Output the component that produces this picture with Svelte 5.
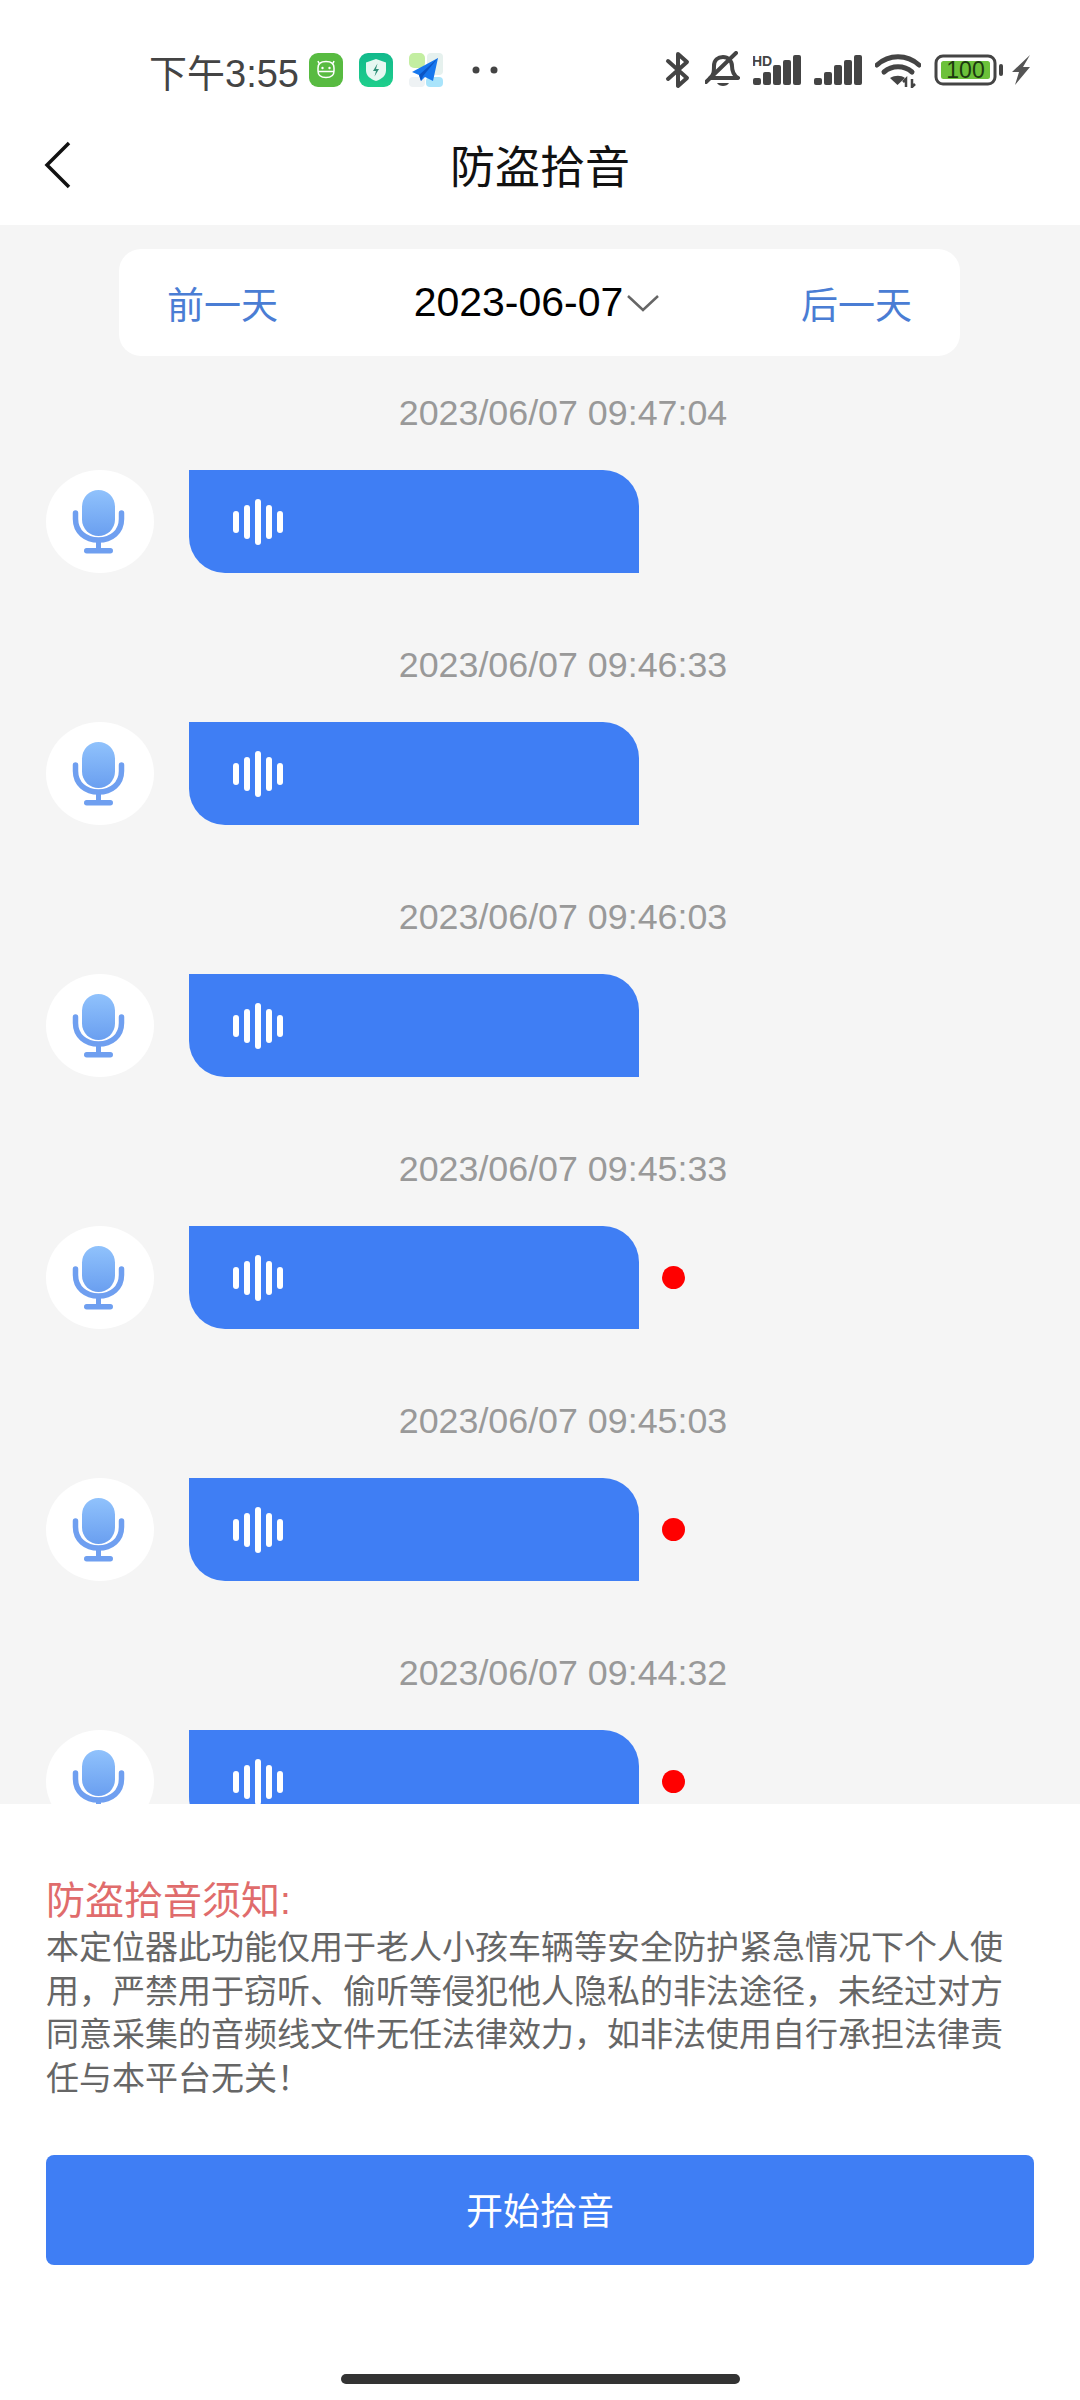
<script>
  const records = [
    { time: '2023/06/07 09:47:04', unread: false },
    { time: '2023/06/07 09:46:33', unread: false },
    { time: '2023/06/07 09:46:03', unread: false },
    { time: '2023/06/07 09:45:33', unread: true },
    { time: '2023/06/07 09:45:03', unread: true },
    { time: '2023/06/07 09:44:32', unread: true }
  ];

  const waveBars = [22, 34, 46, 34, 22];
  const signalBars = [
    { x: 0, h: 7 },
    { x: 10, h: 13 },
    { x: 20, h: 20 },
    { x: 30, h: 25 },
    { x: 40, h: 30 }
  ];
</script>

<div class="page">
  <div class="status-bar">
    <div class="status-left">
      <span class="clock">下午3:55</span>
      <svg class="app-icon" viewBox="0 0 34 34">
        <rect width="34" height="34" rx="9" fill="#58bb41" />
        <path d="M9 15c0-4 3-6.500 8-6.500s8 2.500 8 6.500v3c0 4-3 6.500-8 6.500s-8-2.500-8-6.500z" fill="none" stroke="#fff" stroke-width="1.500" />
        <path d="M10 10.500L9 8M24 10.500L25 8M9 18.500h16" fill="none" stroke="#fff" stroke-width="1.500" />
        <circle cx="13.500" cy="15" r="1.200" fill="#fff" />
        <circle cx="20.500" cy="15" r="1.200" fill="#fff" />
      </svg>
      <svg class="app-icon" viewBox="0 0 34 34">
        <defs>
          <linearGradient id="shield-bg" x1="0" y1="0" x2="0" y2="1">
            <stop offset="0" stop-color="#12b98c" />
            <stop offset="1" stop-color="#1fcf8c" />
          </linearGradient>
        </defs>
        <rect width="34" height="34" rx="9" fill="url(#shield-bg)" />
        <path d="M17 6l10 3.500v8c0 5-4 8.500-10 10.500-6-2-10-5.500-10-10.500v-8z" fill="#e6f8f2" />
        <path d="M18.500 10.500l-4.500 7.500h3l-1.500 5.500 4.500-7.500h-3z" fill="#2f8f78" />
      </svg>
      <svg class="app-icon" viewBox="0 0 34 34">
        <rect x="0" y="0" width="16" height="15" rx="5" fill="#c3eea1" />
        <rect x="18" y="0" width="16" height="22" rx="4" fill="#e6f1ee" />
        <rect x="0" y="24" width="16" height="10" rx="4" fill="#eef2f4" />
        <rect x="17" y="24" width="17" height="10" rx="4" fill="#a9e4fb" />
        <path d="M29 5L3 19l7 3 2 6 4-4 8 4z" fill="#1677ee" />
        <path d="M29 5L10 22l2 6 2-5z" fill="#0b55c4" />
      </svg>
      <svg class="more-dots" width="26" height="8" viewBox="0 0 26 8">
        <circle cx="4" cy="4" r="3.500" fill="#444" />
        <circle cx="22" cy="4" r="3.500" fill="#444" />
      </svg>
    </div>

    <div class="status-right">
      <svg width="27" height="38" viewBox="0 0 27 38">
        <path d="M3 10l19 17-9 8V3l9 8L3 28" fill="none" stroke="#444" stroke-width="4" stroke-linecap="round" stroke-linejoin="round" />
      </svg>
      <svg width="35" height="38" viewBox="0 0 35 38">
        <path d="M5 27c4-3 4-7 4-12 0-6 4-9 9-9s9 4 9 9c0 5 1 9 6 12z" fill="none" stroke="#444" stroke-width="4" stroke-linejoin="round" />
        <path d="M12 32c2 4 10 4 12 0z" fill="#444" />
        <path d="M1 31L31 2" stroke="#444" stroke-width="4" stroke-linecap="round" />
      </svg>
      <svg width="48" height="32" viewBox="0 0 48 32">
        <text class="hd" x="-1" y="12">HD</text>
        {#each signalBars as bar}
          <rect x={bar.x} y={31 - bar.h} width="8" height={bar.h} rx="2" fill="#444" />
        {/each}
      </svg>
      <svg width="48" height="32" viewBox="0 0 48 32">
        {#each signalBars as bar}
          <rect x={bar.x} y={31 - bar.h} width="8" height={bar.h} rx="2" fill="#444" />
        {/each}
      </svg>
      <svg width="46" height="35" viewBox="0 0 46 35">
        <path d="M2 12c12-11 30-11 42 0" fill="none" stroke="#444" stroke-width="5" stroke-linecap="round" />
        <path d="M9 19c8-7 20-7 28 0" fill="none" stroke="#444" stroke-width="5" stroke-linecap="round" />
        <path d="M15 25c5-3 11-3 15 0l-7.500 7z" fill="#444" />
        <path d="M31 34v-8l-3 3M37 26v8l3-3" fill="none" stroke="#444" stroke-width="2.500" />
      </svg>
      <svg width="69" height="32" viewBox="0 0 69 32">
        <rect x="2" y="2" width="59" height="28" rx="7" fill="none" stroke="#444" stroke-width="3" />
        <rect x="7" y="7" width="49" height="18" rx="2.500" fill="#6cc13a" />
        <text class="batt" x="31.500" y="24">100</text>
        <rect x="65" y="10" width="4" height="12" rx="2" fill="#444" />
      </svg>
      <svg class="bolt" width="19" height="30" viewBox="0 0 19 30">
        <path d="M19 0L1 17h7L4 30l15-18h-7z" fill="#555" />
      </svg>
    </div>
  </div>

  <header class="nav-bar">
    <svg class="back" width="28" height="48" viewBox="0 0 28 48">
      <path d="M25 2L3 24l22 22" fill="none" stroke="#111" stroke-width="3.500" />
    </svg>
    <h1>防盗拾音</h1>
  </header>

  <main class="content">
    <div class="date-bar">
      <span class="day-link">前一天</span>
      <div class="date-picker">
        <span class="date">2023-06-07</span>
        <svg width="32" height="18" viewBox="0 0 32 18">
          <path d="M1 2l15 14L31 2" fill="none" stroke="#666" stroke-width="2.500" />
        </svg>
      </div>
      <span class="day-link">后一天</span>
    </div>

    {#each records as record}
      <section class="record">
        <div class="stamp">{record.time}</div>
        <div class="row">
          <div class="avatar">
            <svg width="108" height="103" viewBox="0 0 108 103">
              <defs>
                <linearGradient id="mic-fill" x1="0" y1="0" x2="0" y2="1">
                  <stop offset="0" stop-color="#90c2fc" />
                  <stop offset="1" stop-color="#6a9ff0" />
                </linearGradient>
              </defs>
              <rect x="36" y="20" width="33" height="46" rx="16.500" fill="url(#mic-fill)" />
              <path d="M29.500 43v6c0 13 10 21 23 21s23-8 23-21v-6" fill="none" stroke="#6f9ff0" stroke-width="5.500" stroke-linecap="round" />
              <path d="M52.500 70v10" stroke="#6f9ff0" stroke-width="5" />
              <rect x="38" y="78" width="29" height="5.500" rx="2.700" fill="#6f9ff0" />
            </svg>
          </div>
          <div class="bubble">
            <div class="wave">
              {#each waveBars as h}
                <span style="height: {h}px"></span>
              {/each}
            </div>
          </div>
          {#if record.unread}
            <span class="dot"></span>
          {/if}
        </div>
      </section>
    {/each}
  </main>

  <div class="sheet">
    <h2>防盗拾音须知:</h2>
    <p>本定位器此功能仅用于老人小孩车辆等安全防护紧急情况下个人使用，严禁用于窃听、偷听等侵犯他人隐私的非法途径，未经过对方同意采集的音频线文件无任法律效力，如非法使用自行承担法律责任与本平台无关！</p>
    <button class="start-btn">开始拾音</button>
    <div class="home-bar"></div>
  </div>
</div>

<style>
  :global(body) {
    margin: 0;
    background: #fff;
  }

  .page {
    width: 1080px;
    height: 2400px;
    display: flex;
    flex-direction: column;
    overflow: hidden;
    background: #fff;
    font-family: "Liberation Sans", "Noto Sans CJK SC", sans-serif;
  }

  .status-bar {
    height: 68px;
    padding: 36px 50px 0 149px;
    display: flex;
    justify-content: space-between;
    align-items: center;
    flex-shrink: 0;
  }

  .status-left {
    display: flex;
    align-items: center;
    gap: 16px;
  }

  .clock {
    font-size: 38px;
    color: #444;
    margin-right: -6px;
  }

  .app-icon {
    width: 34px;
    height: 34px;
  }

  .more-dots {
    margin-left: 13px;
  }

  .status-right {
    display: flex;
    align-items: center;
    gap: 13px;
  }

  .hd {
    font-size: 14px;
    font-weight: 700;
    fill: #444;
  }

  .batt {
    font-size: 23px;
    text-anchor: middle;
    fill: #1d3a10;
  }

  .bolt {
    margin-left: -5px;
  }

  .nav-bar {
    height: 121px;
    padding-left: 44px;
    display: flex;
    align-items: center;
    position: relative;
    flex-shrink: 0;
  }

  .nav-bar h1 {
    position: absolute;
    left: 0;
    right: 0;
    margin: 0;
    text-align: center;
    font-size: 45px;
    font-weight: 400;
    color: #111;
  }

  .content {
    flex: 1;
    min-height: 0;
    overflow: hidden;
    background: #f5f5f5;
    padding-top: 24px;
  }

  .date-bar {
    height: 107px;
    margin: 0 120px 37px 119px;
    padding: 0 48px;
    display: flex;
    justify-content: space-between;
    align-items: center;
    background: #fff;
    border-radius: 22px;
  }

  .day-link {
    font-size: 37px;
    color: #4a7dd4;
  }

  .date-picker {
    display: flex;
    align-items: center;
    gap: 4px;
    margin-right: 6px;
  }

  .date {
    font-size: 41px;
    color: #000;
  }

  .record {
    margin-bottom: 72px;
  }

  .stamp {
    height: 40px;
    line-height: 40px;
    padding-left: 46px;
    margin-bottom: 37px;
    text-align: center;
    font-size: 35.800px;
    color: #999;
  }

  .row {
    display: flex;
    align-items: center;
    padding-left: 46px;
    gap: 35px;
  }

  .avatar {
    width: 108px;
    height: 103px;
    border-radius: 50%;
    background: #fff;
    flex-shrink: 0;
  }

  .avatar svg {
    display: block;
  }

  .bubble {
    width: 450px;
    height: 103px;
    padding-left: 44px;
    box-sizing: border-box;
    display: flex;
    align-items: center;
    background: #3f7ef4;
    border-radius: 0 36px 0 36px;
  }

  .wave {
    display: flex;
    align-items: center;
    gap: 5px;
  }

  .wave span {
    width: 6px;
    background: #fff;
    border-radius: 3px;
  }

  .dot {
    width: 23px;
    height: 23px;
    margin-left: -12px;
    border-radius: 50%;
    background: #f00;
  }

  .sheet {
    height: 596px;
    padding: 72px 46px 0;
    box-sizing: border-box;
    display: flex;
    flex-direction: column;
    background: #fff;
    flex-shrink: 0;
  }

  .sheet h2 {
    margin: 0;
    height: 50px;
    line-height: 50px;
    font-size: 39px;
    font-weight: 400;
    color: #e06c6c;
  }

  .sheet p {
    margin: 0;
    width: 970px;
    font-size: 33px;
    line-height: 43.500px;
    color: #666;
  }

  .start-btn {
    margin-top: 55px;
    height: 110px;
    padding-bottom: 4px;
    border: none;
    border-radius: 8px;
    background: #3f7ef4;
    color: #fff;
    font: inherit;
    font-size: 37px;
  }

  .home-bar {
    width: 399px;
    height: 10px;
    margin: 109px auto 0;
    border-radius: 5px;
    background: #333;
  }
</style>
